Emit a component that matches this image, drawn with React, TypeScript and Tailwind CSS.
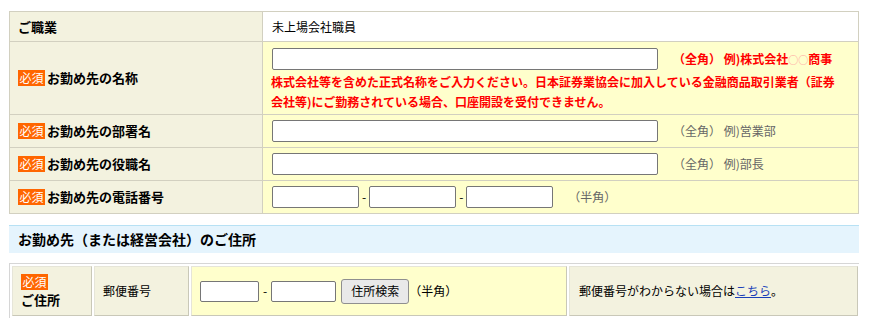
import type { ReactNode } from 'react'

const FONT = '"Noto Sans CJK JP", "Noto Sans", sans-serif'

function Badge() {
  return (
    <span className="inline-flex h-[16px] w-[27px] shrink-0 items-center justify-center bg-[#ff6600] text-[12px] leading-none font-normal text-white">
      必須
    </span>
  )
}

function Input({ width }: { width: string }) {
  return (
    <input
      type="text"
      className={`${width} h-[22px] rounded-[2px] border border-[#767676] bg-white`}
    />
  )
}

interface RowProps {
  label: ReactNode
  required?: boolean
  height: string
  children: ReactNode
  white?: boolean
}

function Row({ label, required, height, children, white }: RowProps) {
  return (
    <div className={`flex border-b border-[#d2d0c0] ${height}`}>
      <div className="flex w-[253px] shrink-0 items-center gap-[2px] border-r border-[#d2d0c0] bg-[#f3f2df] pl-[8px] text-[13px] font-bold text-black">
        {required && <Badge />}
        <span>{label}</span>
      </div>
      <div
        className={`flex-1 pl-[8px] text-[12px] ${white ? 'bg-white' : 'bg-[#ffffcc]'}`}
      >
        {children}
      </div>
    </div>
  )
}

function Hint({ children }: { children: ReactNode }) {
  return <span className="ml-[15px] text-[12px] text-[#666666]">{children}</span>
}

export default function App() {
  return (
    <div className="bg-white px-[9px] pt-[11px]" style={{ fontFamily: FONT }}>
      <div className="w-[850px] border-x border-t border-[#d2d0c0]">
        <Row label="ご職業" height="h-[30px]" white>
          <div className="flex h-full items-center pl-[1px] text-black">未上場会社職員</div>
        </Row>
        <Row label="お勤め先の名称" required height="h-[73px]">
          <div className="flex items-center pt-[6px] pl-[1px]">
            <Input width="w-[386px]" />
            <span className="ml-[15px] text-[12px] font-bold text-[#ff0000]">
              （全角） 例)株式会社
              <span className="text-[10px] font-normal text-[#ff9e9e]">○○</span>
              商事
            </span>
          </div>
          <p className="mt-[2px] text-[12px] leading-[20px] font-bold text-[#ff0000]">
            株式会社等を含めた正式名称をご入力ください。日本証券業協会に加入している金融商品取引業者（証券
            <br />
            会社等)にご勤務されている場合、口座開設を受付できません。
          </p>
        </Row>
        <Row label="お勤め先の部署名" required height="h-[33px]">
          <div className="flex h-full items-center pl-[1px]">
            <Input width="w-[386px]" />
            <Hint>（全角） 例)営業部</Hint>
          </div>
        </Row>
        <Row label="お勤め先の役職名" required height="h-[33px]">
          <div className="flex h-full items-center pl-[1px]">
            <Input width="w-[386px]" />
            <Hint>（全角） 例)部長</Hint>
          </div>
        </Row>
        <Row label="お勤め先の電話番号" required height="h-[33px]">
          <div className="flex h-full items-center pl-[1px]">
            <Input width="w-[87px]" />
            <span className="mx-[3px] text-black">-</span>
            <Input width="w-[87px]" />
            <span className="mx-[3px] text-black">-</span>
            <Input width="w-[87px]" />
            <Hint>（半角）</Hint>
          </div>
        </Row>
      </div>

      <div className="mt-[11px] flex h-[28px] w-[850px] items-center border-t border-[#b7e1f4] bg-[#e5f4fd] pl-[9px] text-[14px] font-bold text-black">
        お勤め先（または経営会社）のご住所
      </div>

      <div className="mt-[10px] flex w-[850px] gap-[2px] border-t border-l border-[#d6d6d6] p-[2px] pr-0">
        <div className="flex h-[50px] w-[80px] flex-col justify-center gap-[2px] border border-t-[#e6e5d8] border-r-[#c9c8b8] border-b-[#c9c8b8] border-l-[#e6e5d8] bg-[#f3f2df] pl-[8px] text-[13px] font-bold text-black">
          <Badge />
          <span className="leading-[16px]">ご住所</span>
        </div>
        <div className="flex h-[50px] w-[95px] items-center border border-t-[#e6e5d8] border-r-[#c9c8b8] border-b-[#c9c8b8] border-l-[#e6e5d8] bg-[#f3f2df] pl-[8px] text-[12px] text-black">
          郵便番号
        </div>
        <div className="flex h-[50px] w-[376px] items-center border border-t-[#e6e5d8] border-r-[#c9c8b8] border-b-[#c9c8b8] border-l-[#e6e5d8] bg-[#ffffcc] pl-[8px] text-[12px] text-black">
          <input
            type="text"
            className="h-[21px] w-[59px] rounded-[2px] border border-[#767676] bg-white"
          />
          <span className="mx-[4px]">-</span>
          <input
            type="text"
            className="h-[21px] w-[65px] rounded-[2px] border border-[#767676] bg-white"
          />
          <button
            type="button"
            className="ml-[5px] h-[25px] w-[68px] rounded-[3px] border border-[#8f8f8f] bg-[#e9e9e9] text-[12px] text-black"
          >
            住所検索
          </button>
          <span>（半角）</span>
        </div>
        <div className="flex h-[50px] w-[289px] items-center border border-t-[#e6e5d8] border-r-[#c9c8b8] border-b-[#c9c8b8] border-l-[#e6e5d8] bg-[#f3f2df] pl-[9px] text-[12px] text-black">
          郵便番号がわからない場合は
          <a href="#" className="text-[#1a3fb8] underline">
            こちら
          </a>
          。
        </div>
      </div>
    </div>
  )
}
